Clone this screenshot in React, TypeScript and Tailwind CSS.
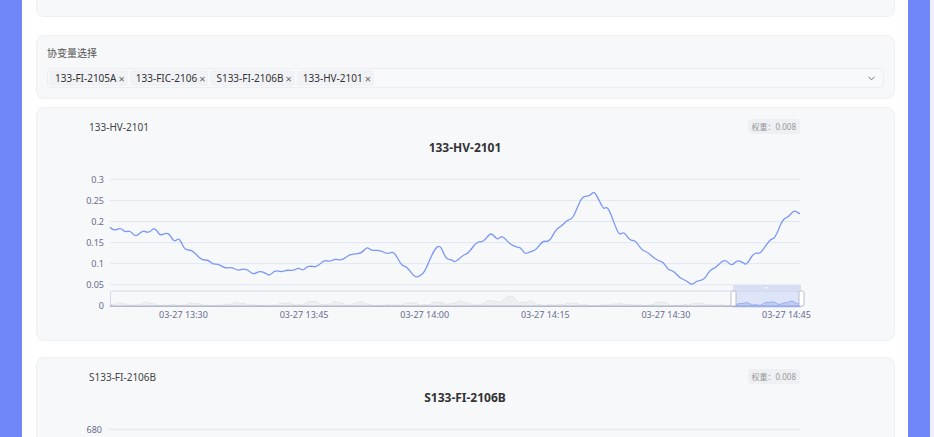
import { ChevronDown } from "lucide-react";

const FONT = "font-['Noto_Sans','Noto_Sans_CJK_SC',sans-serif]";

const TAGS = ["133-FI-2105A", "133-FIC-2106", "S133-FI-2106B", "133-HV-2101"];

// traced from the reference, page coordinates of the first chart card
const HV_POINTS: [number, number][] = [
  [110, 227.3], [113.3, 231], [120.7, 227.7], [125, 232.3], [130, 230.3], [135.7, 237.3], [142.7, 230.3],
  [146.7, 232.3], [150, 232], [153.3, 228.3], [156.7, 230], [160, 235.7], [166.7, 232.7], [170, 235],
  [174, 241.7], [178.3, 238.7], [180, 240], [185, 250], [191.7, 250], [196.7, 255], [201.7, 260],
  [208.3, 260], [213.3, 264.3], [218.3, 264], [225, 268.3], [231.7, 267.3], [238.3, 270.7], [243.3, 268.7],
  [248.3, 270], [253.3, 274.7], [259.3, 271], [265, 272.7], [269.3, 276], [275, 270.3], [281.7, 272],
  [286.7, 270], [293.3, 270.7], [298.3, 267.7], [303.3, 270.7], [306.7, 266.7], [311.7, 266], [316.7, 267.3],
  [324, 260], [330, 261.7], [335, 258.7], [341.7, 260.7], [348.3, 255.3], [353.3, 254], [361.7, 253.3],
  [366.7, 246.7], [371.7, 250.7], [380, 250], [386.7, 254], [391.7, 252], [395, 253.3], [401.7, 265.7],
  [406.7, 266.7], [415, 277.7], [420, 276], [425, 271.7], [433.3, 251], [440, 244], [446, 259.3],
  [451.7, 259.3], [455, 262.7], [463.3, 255], [468.3, 253.3], [476.7, 241.7], [483.3, 242], [490, 233.3],
  [493.3, 235], [497.7, 240], [501.7, 235.3], [510, 244], [516.7, 247.3], [520.7, 247.3], [525, 254.3],
  [530, 251.7], [536, 250], [542.7, 240.7], [549.3, 242], [556, 229.3], [561.7, 226], [567.3, 220],
  [571.7, 219.3], [575, 213.3], [581.7, 197.3], [586.7, 196], [590, 195.7], [594, 191.3], [598.3, 198.3],
  [603.3, 209.3], [606.7, 206.7], [610, 211.7], [616.7, 230], [620, 235], [624, 231.7], [630, 240.7],
  [635, 240], [641.7, 250], [647.3, 252], [653.3, 257.3], [658.3, 260.7], [663.3, 262], [668.3, 270],
  [673.3, 270.7], [680, 278.3], [686.7, 280.7], [691.7, 285.3], [696.7, 280.7], [704, 280], [710, 270],
  [715, 268.3], [722.7, 260.7], [726.7, 260.7], [731.7, 266], [737.3, 260], [743.3, 262.7], [746.7, 265],
  [754, 252.3], [760, 254], [765, 246.7], [770.7, 239], [775, 238.3], [782.7, 219], [788.3, 217.3],
  [793.3, 210.7], [796.7, 211.7], [800, 214],
];

const FI_POINTS: [number, number][] = Array.from({ length: 70 }, (_, i) => {
  const x = 110 + i * 10;
  return [x, 470 + 12 * Math.sin(i * 0.35) + 6 * Math.sin(i * 1.3)];
});

const BUMPS: [number, number][] = [
  [122, 2], [148, 2.5], [192, 2], [238, 3], [287, 2.5], [313, 4], [337, 3], [360, 3], [410, 2.5],
  [437, 3.5], [460, 4.5], [490, 5], [510, 10], [530, 4], [570, 2.5], [620, 2], [660, 3], [700, 2.5],
  [745, 2], [770, 3], [790, 4],
];

function smoothPath(pts: [number, number][]): string {
  let d = `M${pts[0][0]},${pts[0][1]}`;
  for (let i = 1; i < pts.length - 1; i++) {
    const mx = (pts[i][0] + pts[i + 1][0]) / 2;
    const my = (pts[i][1] + pts[i + 1][1]) / 2;
    d += ` Q${pts[i][0]},${pts[i][1]} ${mx},${my}`;
  }
  const last = pts[pts.length - 1];
  return d + ` L${last[0]},${last[1]}`;
}

function shadowPoints(): string {
  const pts: string[] = ["110,306"];
  for (let x = 110; x <= 800; x += 2) {
    let h = 0.8 + 0.5 * Math.sin(x * 0.7) + 0.4 * Math.sin(x * 0.23);
    for (const [c, a] of BUMPS) h += a * Math.exp(-((x - c) ** 2) / 60);
    pts.push(`${x},${(306 - Math.max(h, 0.3)).toFixed(1)}`);
  }
  pts.push("800,306");
  return pts.join(" ");
}

const X_LABELS = ["03-27 13:30", "03-27 13:45", "03-27 14:00", "03-27 14:15", "03-27 14:30", "03-27 14:45"];

type ChartProps = {
  title: string;
  ticks: string[];
  labelX: number;
  gridX: number;
  points: [number, number][];
  // below the fold: only the top of the chart is on screen
  cropped?: boolean;
};

function Chart({ title, ticks, labelX, gridX, points, cropped }: ChartProps) {
  const shadow = shadowPoints();
  const id = title.replace(/[^a-z0-9]/gi, "");
  return (
    <svg width={856} height={206} viewBox="37 134 856 206" className="block">
      <defs>
        <clipPath id={`win-${id}`}>
          <rect x={733} y={284} width={68} height={24} />
        </clipPath>
        <clipPath id={`plot-${id}`}>
          <rect x={100} y={160} width={710} height={148} />
        </clipPath>
      </defs>
      <text x={465} y={147} textAnchor="middle" dominantBaseline="central" fontSize={12} fontWeight={700} fill="#333">
        {title}
      </text>
      {ticks.map((t, i) => {
        const y = 179.3 + i * 21.1;
        return (
          <g key={t}>
            <line x1={gridX} x2={800} y1={y} y2={y} stroke="#e0e6f1" strokeWidth={1} />
            <text x={labelX} y={y} textAnchor="end" dominantBaseline="central" fontSize={9} fill="#676d8c">
              {t}
            </text>
          </g>
        );
      })}
      {!cropped && (
        <>
          <path
            d={smoothPath(points)}
            fill="none"
            stroke="#7b97f6"
            strokeWidth={1.3}
            strokeLinejoin="round"
            clipPath={`url(#plot-${id})`}
          />
          {/* data zoom slider */}
          <rect x={110.5} y={291} width={689.5} height={15} rx={2} fill="none" stroke="#d2dbee" />
          <polygon points={shadow} fill="rgba(0,0,0,0.035)" stroke="rgba(0,0,0,0.07)" strokeWidth={0.8} />
          <line x1={110} x2={800} y1={306.5} y2={306.5} stroke="#b5b9c4" strokeWidth={1} />
          <rect x={733} y={285} width={68} height={6} fill="#d9dff3" />
          <rect x={733} y={291} width={68} height={17} fill="rgba(135,164,246,0.22)" />
          <g clipPath={`url(#win-${id})`}>
            <polygon points={shadow} fill="rgba(122,150,240,0.25)" stroke="#93a8f2" strokeWidth={0.8} />
          </g>
          <rect x={765} y={287} width={1} height={1.5} fill="#fff" />
          <rect x={767} y={287} width={1} height={1.5} fill="#fff" />
          <rect x={731} y={291} width={5} height={15} rx={1.5} fill="#fff" stroke="#a9afbd" strokeWidth={0.8} />
          <rect x={799} y={291} width={5} height={15} rx={1.5} fill="#fff" stroke="#a9afbd" strokeWidth={0.8} />
          {X_LABELS.map((l, i) => (
            <text key={l} x={183.5 + i * 120.6} y={314.5} textAnchor="middle" dominantBaseline="central" fontSize={9} fill="#676d8c">
              {l}
            </text>
          ))}
        </>
      )}
    </svg>
  );
}

function ChartCard(props: ChartProps) {
  return (
    <div className="shrink-0 rounded-lg border border-[#eef0f4] bg-[#f7f8fa] pt-[11px]">
      <div className="flex h-[15px] items-center justify-between pl-[52px] pr-[94px]">
        <span className="text-[10px] leading-none text-[#444]">{props.title}</span>
        <span className="flex h-[15px] items-center rounded-[3px] bg-[#eef0f3] px-[4px] text-[8px] leading-none text-[#999]">
          权重：0.008
        </span>
      </div>
      <Chart {...props} />
    </div>
  );
}

export default function App() {
  return (
    <div className={`flex h-[437px] w-[934px] overflow-hidden bg-white ${FONT}`}>
      <div className="w-[22px] shrink-0 bg-[#7086f7]" />
      <div className="flex w-[886px] shrink-0 flex-col pl-[14px] pr-[13px]">
        <div className="h-[17px] shrink-0 rounded-b-lg border-x border-b border-[#eef0f4] bg-[#f7f8fa]" />

        <div className="mt-[18px] shrink-0 rounded-lg border border-[#eef0f4] bg-[#f7f8fa] px-[10px] pt-[10px] pb-[10px]">
          <div className="h-[14px] text-[10px] leading-[14px] text-[#555]">协变量选择</div>
          <div className="mt-[8px] flex h-[20px] items-center justify-between rounded-[4px] border border-[#eceef2] bg-[#f8f9fb] pl-[1px] pr-[6px]">
            <div className="flex items-center gap-[2px]">
              {TAGS.map((t) => (
                <span
                  key={t}
                  className="flex h-[16px] items-center gap-[2px] rounded-[3px] bg-[#f1f2f5] pl-[6px] pr-[3px] text-[10px] leading-none text-[#333]"
                >
                  {t}
                  <span className="text-[11px] leading-none text-[#666]">×</span>
                </span>
              ))}
            </div>
            <ChevronDown size={11} strokeWidth={2} className="text-[#666]" />
          </div>
        </div>

        <div className="mt-[8px] flex flex-col gap-[16px]">
          <ChartCard
            title="133-HV-2101"
            ticks={["0.3", "0.25", "0.2", "0.15", "0.1", "0.05", "0"]}
            labelX={104}
            gridX={110}
            points={HV_POINTS}
          />
          <ChartCard title="S133-FI-2106B" ticks={["680"]} labelX={102} gridX={108} points={FI_POINTS} cropped />
        </div>
      </div>
      <div className="w-[22px] shrink-0 bg-[#7086f7]" />
      <div className="flex-1 bg-[#eceffc]" />
    </div>
  );
}
